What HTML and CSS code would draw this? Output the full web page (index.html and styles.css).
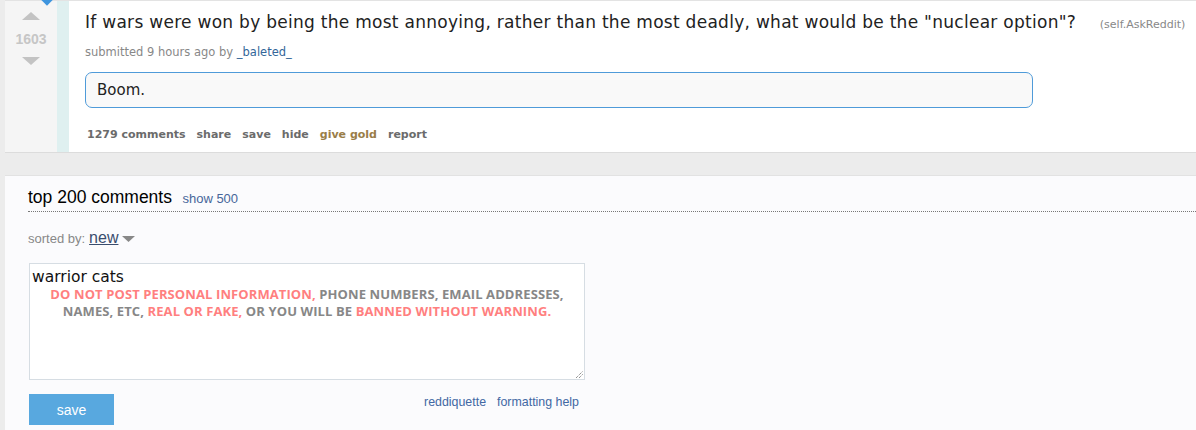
FILE: index.html
```html
<!DOCTYPE html>
<html>
<head>
<meta charset="utf-8">
<link rel="stylesheet" href="styles.css">
</head>
<body>
<div class="post">
  <div class="vote">
    <svg class="arrow" width="18" height="8" viewBox="0 0 18 8"><polygon points="9,0 18,8 0,8" fill="#c3c3c3"/></svg>
    <div class="score">1603</div>
    <svg class="arrow down" width="18" height="8" viewBox="0 0 18 8"><polygon points="0,0 18,0 9,8" fill="#c3c3c3"/></svg>
  </div>
  <div class="stripe"></div>
  <span class="diamond"></span>
  <div class="entry">
    <p class="title"><span class="title-text">If wars were won by being the most annoying, rather than the most deadly, what would be the "nuclear option"?</span> <span class="domain">(self.AskReddit)</span></p>
    <p class="tagline">submitted 9 hours ago by <a class="author">_baleted_</a></p>
    <div class="selftext">Boom.</div>
    <ul class="buttons">
      <li>1279 comments</li>
      <li>share</li>
      <li>save</li>
      <li>hide</li>
      <li class="gold">give gold</li>
      <li>report</li>
    </ul>
  </div>
</div>

<div class="comments">
  <div class="pane-title">
    <span class="pane-heading">top 200 comments</span>
    <a class="show-more">show 500</a>
  </div>
  <div class="menuarea">
    <span class="sort-label">sorted by:</span>
    <a class="sort-value">new</a>
    <svg class="sort-caret" width="13" height="6" viewBox="0 0 13 6"><polygon points="0,0 13,0 6.5,6" fill="#888"/></svg>
  </div>
  <form class="reply">
    <div class="textbox">
      <div class="typed">warrior cats</div>
      <p class="warning"><span class="red">DO NOT POST PERSONAL INFORMATION,</span> PHONE NUMBERS, EMAIL ADDRESSES,<br>NAMES, ETC, <span class="red">REAL OR FAKE,</span> OR YOU WILL BE <span class="red">BANNED WITHOUT WARNING.</span></p>
      <svg class="grip" width="8" height="8" viewBox="0 0 8 8"><path d="M1 8 L8 1 M4 8 L8 4" stroke="#666" stroke-width="1" stroke-dasharray="1 1"/></svg>
    </div>
    <div class="reply-bottom">
      <button type="button" class="save-btn">save</button>
      <div class="help-links">
        <a>reddiquette</a>
        <a>formatting help</a>
      </div>
    </div>
  </form>
</div>
</body>
</html>
```
FILE: styles.css
```css
* { box-sizing: border-box; }
html, body { margin: 0; padding: 0; }
body {
  background: #ececec;
  width: 1196px;
  height: 430px;
  overflow: hidden;
  font-family: "DejaVu Sans", Verdana, sans-serif;
}
p { margin: 0; }
a { cursor: pointer; }

.post {
  position: relative;
  margin-left: 5px;
  display: flex;
  background: #fff;
  border-top: 1px solid #e3e3e3;
  border-bottom: 1px solid #dcdcdc;
  height: 153px;
}
.vote {
  width: 52px;
  background: #f5f5f5;
  display: flex;
  flex-direction: column;
  align-items: center;
  padding-top: 11px;
}
.arrow { display: block; }
.score {
  font-family: "Liberation Sans", Arial, sans-serif;
  font-weight: bold;
  font-size: 14px;
  color: #c6c6c6;
  line-height: 16px;
  margin-top: 11px;
}
.arrow.down { margin-top: 10px; }
.stripe {
  width: 12px;
  background: #dff0f0;
}
.diamond {
  position: absolute;
  left: 38px;
  top: -5px;
  width: 8px;
  height: 8px;
  background: #3f95de;
  transform: rotate(45deg);
}
.entry {
  padding-left: 16px;
  padding-top: 11px;
  flex: 1;
}
.title {
  font-size: 17px;
  letter-spacing: 0.28px;
  line-height: 20px;
  color: #222;
  white-space: nowrap;
}
.domain {
  font-size: 11px;
  letter-spacing: 0;
  color: #888;
  margin-left: 18px;
}
.tagline {
  margin-top: 10px;
  font-size: 11.5px;
  line-height: 14px;
  color: #888;
}
.author { color: #369; }
.selftext {
  margin-top: 13px;
  width: 948px;
  height: 36px;
  border: 1px solid #4f9bd9;
  border-radius: 7px;
  background: #f9f9f9;
  padding: 7px 11px;
  font-size: 15px;
  line-height: 20px;
  color: #222;
}
.buttons {
  list-style: none;
  margin: 20px 0 0 2px;
  padding: 0;
  display: flex;
  gap: 11px;
  font-size: 11px;
  line-height: 14px;
  font-weight: bold;
  color: #6b6b6b;
}
.buttons .gold { color: #9a7d48; }

.comments {
  margin-top: 22px;
  margin-left: 5px;
  background: #fbfbfd;
  border-top: 1px solid #e2e2e2;
  padding: 11px 0 0 23px;
  height: 260px;
  font-family: "Liberation Sans", Arial, sans-serif;
}
.pane-title {
  border-bottom: 1px dotted #777;
  padding-bottom: 2px;
  line-height: 20px;
}
.pane-heading {
  font-size: 17.5px;
  color: #000;
}
.show-more {
  font-size: 13px;
  color: #46669a;
  margin-left: 6px;
}
.menuarea {
  margin-top: 16px;
  display: flex;
  align-items: baseline;
  line-height: 20px;
}
.sort-label {
  font-size: 13px;
  color: #888;
}
.sort-value {
  font-size: 16px;
  color: #3a4d6e;
  text-decoration: underline;
  margin-left: 4px;
}
.sort-caret {
  margin-left: 4px;
  align-self: center;
}
.reply {
  margin: 14px 0 0 1px;
  width: 556px;
}
.textbox {
  position: relative;
  height: 117px;
  border: 1px solid #d6dde3;
  background: #fff;
  padding: 5px 2px;
}
.typed {
  font-family: "DejaVu Sans", Verdana, sans-serif;
  font-size: 15.5px;
  line-height: 17px;
  color: #111;
}
.warning {
  font-family: "Open Sans", sans-serif;
  font-weight: bold;
  font-size: 13px;
  letter-spacing: 0.1px;
  line-height: 17px;
  color: #878787;
  text-align: center;
}
.warning .red { color: #ff7f7f; }
.grip {
  position: absolute;
  right: 1px;
  bottom: 1px;
}
.reply-bottom {
  margin-top: 14px;
  display: flex;
  justify-content: space-between;
  align-items: flex-start;
}
.save-btn {
  width: 85px;
  height: 31px;
  border: none;
  background: #58a8df;
  color: #fff;
  font-family: "Liberation Sans", Arial, sans-serif;
  font-size: 14px;
  padding: 0;
}
.help-links {
  display: flex;
  gap: 11px;
  font-size: 12.4px;
  color: #4268a3;
  padding-right: 6px;
  padding-top: 1px;
}
```
